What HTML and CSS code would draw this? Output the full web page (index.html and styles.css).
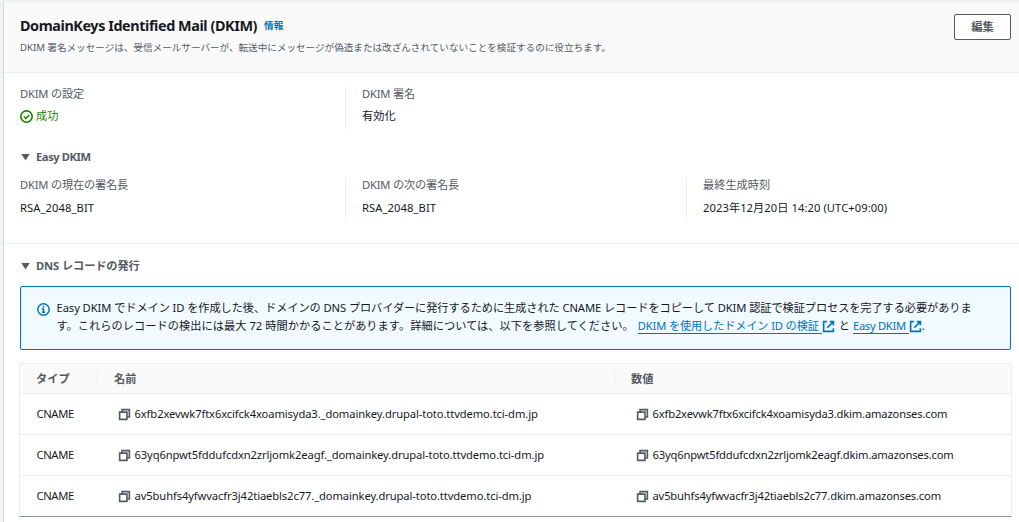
FILE: index.html
```html
<!DOCTYPE html>
<html lang="ja">
<head>
<meta charset="utf-8">
<title>DomainKeys Identified Mail (DKIM)</title>
<link rel="stylesheet" href="styles.css">
</head>
<body>
<svg class="sprite" width="0" height="0" aria-hidden="true">
  <symbol id="copy" viewBox="0 0 16 16"><path d="M2 5h9v9H2z"/><path d="M5 5V2h9v9h-3"/></symbol>
  <symbol id="external" viewBox="0 0 16 16"><path d="M6 2H2v12h12v-4M9.500 2H14v4.500M6.500 9.500 14 2"/></symbol>
</svg>
<main class="panel">
  <header class="panel-header">
    <div class="heading">
      <h1 class="title"><span class="title-text">DomainKeys Identified Mail (DKIM)</span><a class="info">情報</a></h1>
      <p class="description">DKIM 署名メッセージは、受信メールサーバーが、転送中にメッセージが偽造または改ざんされていないことを検証するのに役立ちます。</p>
    </div>
    <button class="edit">編集</button>
  </header>
  <section class="settings">
    <dl class="columns">
      <div class="col"><dt>DKIM の設定</dt><dd class="success"><svg class="status" viewBox="0 0 16 16"><circle cx="8" cy="8" r="7"/><path d="m4.800 8 2.400 2.400 4-4.300"/></svg>成功</dd></div>
      <div class="col"><dt>DKIM 署名</dt><dd>有効化</dd></div>
    </dl>
    <h2 class="expander"><i class="caret"></i><span class="easy">Easy DKIM</span></h2>
    <dl class="columns key-columns">
      <div class="col"><dt>DKIM の現在の署名長</dt><dd class="rsa">RSA_2048_BIT</dd></div>
      <div class="col"><dt>DKIM の次の署名長</dt><dd class="rsa">RSA_2048_BIT</dd></div>
      <div class="col"><dt class="han">最終生成時刻</dt><dd class="date">2023年12月20日 14:20 (UTC+09:00)</dd></div>
    </dl>
  </section>
  <section class="dns">
    <h2 class="expander"><i class="caret"></i><span class="dns-title">DNS レコードの発行</span></h2>
    <div class="alert">
      <svg class="info-icon" viewBox="0 0 16 16"><circle cx="8" cy="8" r="7"/><path d="M8 3.500v2M6 7.500h2v4M6 11.500h4"/></svg>
      <div class="message">
        <p class="line-one">Easy DKIM でドメイン ID を作成した後、ドメインの DNS プロバイダーに発行するために生成された CNAME レコードをコピーして DKIM 認証で検証プロセスを完了する必要がありま</p>
        <p class="line-two"><span class="lead">す。これらのレコードの検出には最大 72 時間かかることがあります。詳細については、以下を参照してください。</span><a class="link verify">DKIM を使用したドメイン ID の検証</a><svg class="external"><use href="#external"/></svg><span class="and">と</span><a class="link easy-link">Easy DKIM</a><svg class="external"><use href="#external"/></svg><span>.</span></p>
      </div>
    </div>
    <div class="table">
      <div class="row head"><div class="cell">タイプ</div><div class="cell">名前</div><div class="cell">数値</div></div>
      <div class="row"><div class="cell"><span class="cname">CNAME</span></div><div class="cell"><svg class="copy"><use href="#copy"/></svg><span class="name">6xfb2xevwk7ftx6xcifck4xoamisyda3._domainkey.drupal-toto.ttvdemo.tci-dm.jp</span></div><div class="cell"><svg class="copy"><use href="#copy"/></svg><span class="value">6xfb2xevwk7ftx6xcifck4xoamisyda3.dkim.amazonses.com</span></div></div>
      <div class="row"><div class="cell"><span class="cname">CNAME</span></div><div class="cell"><svg class="copy"><use href="#copy"/></svg><span class="name">63yq6npwt5fddufcdxn2zrljomk2eagf._domainkey.drupal-toto.ttvdemo.tci-dm.jp</span></div><div class="cell"><svg class="copy"><use href="#copy"/></svg><span class="value">63yq6npwt5fddufcdxn2zrljomk2eagf.dkim.amazonses.com</span></div></div>
      <div class="row"><div class="cell"><span class="cname">CNAME</span></div><div class="cell"><svg class="copy"><use href="#copy"/></svg><span class="name">av5buhfs4yfwvacfr3j42tiaebls2c77._domainkey.drupal-toto.ttvdemo.tci-dm.jp</span></div><div class="cell"><svg class="copy"><use href="#copy"/></svg><span class="value">av5buhfs4yfwvacfr3j42tiaebls2c77.dkim.amazonses.com</span></div></div>
    </div>
  </section>
</main>
</body>
</html>
```
FILE: styles.css
```css
* { box-sizing: border-box; margin: 0; padding: 0; }
body {
  height: 522px;
  padding: 1px 0 0 3px;
  overflow: hidden;
  background: #f2f3f3;
  color: #16191f;
  font: 11.2px/18px "Noto Sans", "Noto Sans CJK JP", sans-serif;
  white-space: nowrap;
}
.sprite { position: absolute; }
svg { flex: none; fill: none; stroke: currentColor; stroke-width: 2; }
.panel { height: 521px; background: #fff; border-top: 1px solid #eaeded; border-left: 1px solid #d5dbdb; }
.panel-header {
  display: flex;
  justify-content: space-between;
  height: 71px;
  padding: 12px 8px 0 16px;
  background: #fafafa;
  border-bottom: 1px solid #eaeded;
}
.title { display: flex; align-items: center; height: 23px; font-size: 14.4px; font-weight: 700; }
.title-text { letter-spacing: -0.42px; }
.info { margin: 1px 0 0 7px; color: #0073bb; font-size: 9.6px; }
.description { height: 22px; color: #545b64; font-size: 9.6px; line-height: 22px; letter-spacing: -0.01px; }
.edit { width: 57px; height: 26px; background: #fff; border: 1px solid #545b64; border-radius: 2px; color: #545b64; font: inherit; font-weight: 700; line-height: 22px; }
.settings { height: 171px; padding: 13px 0 0 16px; border-bottom: 1px solid #eaeded; }
.columns { display: grid; grid-template-columns: 325px 341px 1fr; height: 43px; }
.col + .col { padding-left: 16px; border-left: 1px solid #eaeded; }
dt { height: 17px; line-height: 15px; color: #545b64; letter-spacing: -0.19px; }
.han { letter-spacing: 0; }
dd { display: flex; align-items: center; height: 26px; }
.key-columns dd { padding: 2px 0 0; }
.rsa { letter-spacing: 0.09px; }
.date { letter-spacing: 0.07px; }
.success { gap: 3px; color: #1d8102; }
.status { width: 13px; height: 13px; }
.expander { display: flex; align-items: center; gap: 6px; height: 18px; color: #545b64; font-size: 11.2px; font-weight: 700; }
.settings .expander { margin: 19px 0 11px; }
.caret { width: 9px; height: 7px; margin-left: 1px; background: #545b64; clip-path: polygon(0 0, 100% 0, 50% 100%); }
.easy { letter-spacing: -0.42px; }
.dns-title { letter-spacing: -0.1px; }
.dns { padding: 13px 7px 0 15px; }
.dns .expander { padding-left: 1px; }
.alert { display: flex; height: 64px; margin: 11px 1px 13px; padding: 12px 16px 0; background: #f1faff; border: 1px solid #0073bb; border-radius: 2px; }
.info-icon { width: 13px; height: 13px; margin: 4px 6.5px 0 0; color: #0073bb; stroke-width: 1.8; }
.line-one, .line-two { height: 18px; }
.line-one { letter-spacing: -0.073px; }
.line-two { display: flex; align-items: center; }
.lead { margin-right: 4px; letter-spacing: 0.05px; }
.link { height: 16px; padding-right: 3px; color: #0073bb; line-height: 16px; border-bottom: 1px solid #0073bb; }
.verify { letter-spacing: -0.14px; }
.easy-link { letter-spacing: -0.3px; }
.external { width: 13px; height: 13px; color: #0073bb; }
.and { margin: 0 3px 0 4px; }
.table { border: 1px solid #eaeded; border-bottom-color: #879196; }
.row { display: grid; grid-template-columns: 77px 517px 1fr; height: 41px; border-bottom: 1px solid #eaeded; }
.row:last-child { height: 40px; border-bottom: 0; }
.head { height: 30px; background: #fafafa; color: #545b64; font-weight: 700; }
.cell { display: flex; align-items: center; padding-left: 16px; }
.cell + .cell { padding-left: 21px; }
.cell + .cell + .cell { padding-left: 22px; }
.head .cell { align-self: center; height: 16px; }
.head .cell + .cell { padding-left: 16px; border-left: 1px solid #eaeded; }
.copy { width: 13px; height: 13px; margin: 1px 3.5px 0 0; color: #545b64; }
.cname { padding-left: 0.5px; letter-spacing: -0.35px; }
.name { letter-spacing: -0.105px; }
.value { letter-spacing: -0.165px; }
```
